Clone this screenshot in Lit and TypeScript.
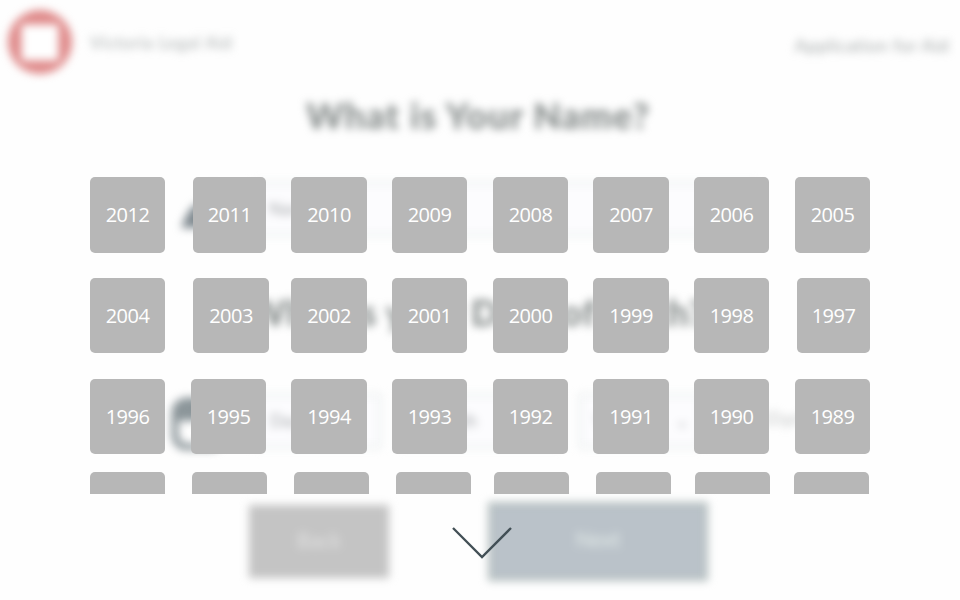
import { LitElement, html, css } from "lit";
import { customElement, property } from "lit/decorators.js";

interface Tile { start: number; width: number; label: string; }
interface Row { top: number; height: number; clipped: boolean; tiles: Tile[]; }

const makeRow = (top: number, height: number, xs: number[], ws: number[], first: number | null): Row => ({
  top, height, clipped: first === null,
  tiles: xs.map((x, i) => ({
    start: i === 0 ? 0 : x - xs[i - 1] - ws[i - 1],
    width: ws[i],
    label: first === null ? "" : String(first - i),
  })),
});

const ROWS: Row[] = [
  makeRow(0, 76, [90, 193, 291, 392, 493, 593, 694, 795], [75, 73, 76, 75, 75, 76, 75, 75], 2012),
  makeRow(25, 75, [90, 193, 291, 392, 493, 593, 694, 797], [75, 76, 76, 75, 75, 76, 75, 73], 2004),
  makeRow(26, 75, [90, 191, 291, 392, 493, 593, 694, 795], [75, 75, 76, 75, 75, 76, 75, 75], 1996),
  makeRow(18, 22, [90, 192, 294, 396, 494, 596, 695, 794], [75, 75, 75, 75, 75, 75, 75, 75], null),
];

@customElement("name-form")
class NameForm extends LitElement {
  static styles = css`
    :host { display: block; height: 600px; filter: blur(4.3px); color: #858b8a; }
    .page { display: flex; flex-direction: column; height: 600px; box-sizing: border-box; }
    header { display: flex; align-items: center; height: 84px; padding: 0 11px 0 8px; box-sizing: border-box; }
    .logo { display: block; width: 64px; height: 64px; }
    .brand { font-size: 17px; letter-spacing: 0.7px; margin-left: 18px; color: #a9aeae; width: 146px; white-space: nowrap; }
    .app { margin-left: auto; font-size: 18px; letter-spacing: 0.4px; color: #a5aaaa; white-space: nowrap; padding-top: 6px; }
    h1 { margin: 0; text-align: center; font-size: 36px; line-height: 44px; font-weight: 900; letter-spacing: 1.1px; white-space: nowrap; }
    .first { margin-top: 9px; padding-right: 4px; }
    .line { display: flex; align-items: flex-start; }
    .name { margin: 44px 0 0 181px; height: 56px; }
    .icon { display: block; width: 50px; height: 56px; flex: none; }
    .input { box-sizing: border-box; height: 56px; border: 4px solid #f0f3f3; background: #fcfcfe; font-size: 17px; line-height: 48px; padding-left: 12px; color: #a4a7aa; }
    .full { width: 506px; margin-left: 22px; }
    .second { margin-top: 53px; letter-spacing: 0.8px; padding-right: 6px; }
    .birth { margin: 59px 0 0 170px; height: 56px; }
    .birth .icon { width: 56px; margin-top: 1px; }
    .day { width: 128px; margin-left: 28px; }
    .month { width: 164px; margin-left: 16px; padding-left: 25px; }
    .year { width: 124px; margin-left: 16px; display: flex; justify-content: space-between; padding-right: 9px; }
    .optional { margin: 14px 0 0 58px; font-size: 18px; letter-spacing: 2.4px; color: #b8bbbb; }
    .actions { display: flex; align-items: center; margin: 53px 0 0 249px; gap: 99px; }
    .back, .next { display: flex; align-items: center; justify-content: center; font-size: 21px; box-sizing: border-box; }
    .back { width: 140px; height: 73px; background: #c4c4c4; color: #e2e2e2; padding-bottom: 5px; }
    .next { width: 220px; height: 79px; background: #bac2c9; border: 4px solid #b5c0bf; color: #e6eeeb; padding-bottom: 6px; }
  `;
  render() {
    return html`<div class="page">
      <header>
        <svg class="logo" viewBox="0 0 64 64"><circle cx="32" cy="32" r="32" fill="#df8a8a"/><rect x="13.5" y="14.5" width="37" height="36" fill="#fff"/></svg>
        <span class="brand">Victoria Legal Aid</span><span class="app">Application for Aid</span>
      </header>
      <h1 class="first">What is Your Name?</h1>
      <div class="line name">
        <svg class="icon" viewBox="0 0 50 56"><circle cx="32" cy="15" r="10" fill="#808a90"/><path d="M0 47C5 33 11 22 20 22H30C41 23 46 34 50 47Z" fill="#808a90"/></svg>
        <div class="input full">Name</div>
      </div>
      <h1 class="second">What is your Date of Birth?</h1>
      <div class="line birth">
        <svg class="icon" viewBox="0 0 56 56"><rect x="5" y="7" width="46" height="46" rx="12" fill="none" stroke="#8c969a" stroke-width="7"/><path d="M5 18Q8 7 18 7H51V27H5Z" fill="#8c969a"/></svg>
        <div class="input day">Day</div><div class="input month">Month</div>
        <div class="input year"><span>Year</span><span>⌄</span></div><span class="optional">(Optional)</span>
      </div>
      <div class="actions"><div class="back">Back</div><div class="next">Next</div></div>
    </div>`;
  }
}

@customElement("year-grid")
class YearGrid extends LitElement {
  @property({ attribute: false }) rows: Row[] = [];
  static styles = css`
    :host { display: block; }
    .row { display: flex; }
    .tile { display: flex; align-items: center; justify-content: center; flex: none; box-sizing: border-box; border-radius: 5px; background: #b7b7b7; color: #fff; font-family: "Open Sans", Lato, sans-serif; font-size: 20px; line-height: 24px; letter-spacing: -0.5px; }
    .clipped .tile { border-radius: 5px 5px 0 0; }
  `;
  render() {
    return this.rows.map(r => html`<div class="row ${r.clipped ? "clipped" : ""}" style="margin-top:${r.top}px;height:${r.height}px">
      ${r.tiles.map(t => html`<div class="tile" style="margin-left:${t.start}px;width:${t.width}px">${t.label}</div>`)}
    </div>`);
  }
}

@customElement("app-root")
class AppRoot extends LitElement {
  static styles = css`
    :host { display: block; position: relative; width: 960px; height: 600px; overflow: hidden; background: #fefefe; font-family: Lato, "Open Sans", sans-serif; }
    .overlay { position: absolute; inset: 0; padding: 177px 90px 0; display: flex; flex-direction: column; }
    .more { display: block; width: 62px; height: 34px; margin: 32px 0 0 361px; }
  `;
  render() {
    return html`<name-form></name-form>
      <div class="overlay">
        <year-grid .rows=${ROWS}></year-grid>
        <svg class="more" viewBox="0 0 62 34"><path d="M2 2L31 31L60 2" fill="none" stroke="#424f55" stroke-width="2.3"/></svg>
      </div>`;
  }
}
